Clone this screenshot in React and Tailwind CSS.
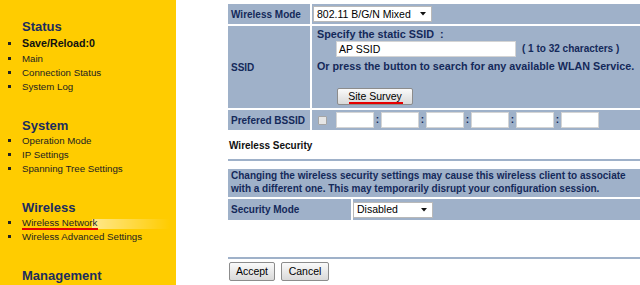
import React from "react";

function Bullet() {
  return (
    <span className="w-[22px] shrink-0 flex items-center pl-[8px]">
      <span className="w-[3px] h-[3px] bg-[#222] mb-[1px]" />
    </span>
  );
}

function Item({ children, bold, active }) {
  return (
    <li className={bold ? "relative flex items-center h-[17px] leading-[17px] text-[10.7px] font-bold text-[#111]" : "relative flex items-center h-[14px] leading-[14px] text-[9.7px] text-[#222]"}>
      <Bullet />
      {active ? (
        <>
          <span className="absolute left-[92px] top-[3px] h-[10px] w-[78px] bg-linear-to-r from-white/55 to-transparent" />
          <span className="relative border-b-2 border-[#e50000] leading-[11px] pr-[1px]">{children}</span>
        </>
      ) : (
        <span>{children}</span>
      )}
    </li>
  );
}

function Heading({ children }) {
  return <div className="pl-[22px] text-[13px] font-bold leading-4 text-[#1b2d5e]">{children}</div>;
}

function Arrow() {
  return (
    <svg width="6" height="4" viewBox="0 0 6 4" className="shrink-0">
      <path d="M0 0 H6 L3 3.5 Z" fill="#111" />
    </svg>
  );
}

function SelectBox({ value, w }) {
  return (
    <div className={`${w} h-[16px] bg-white border border-[#b9b9b9] flex items-center justify-between pl-[3px] pr-[5px] text-[10.5px] font-normal text-black leading-none`}>
      <span>{value}</span>
      <Arrow />
    </div>
  );
}

function Btn({ children, w, h, underline }) {
  return (
    <div className={`${w} ${h} relative flex items-center justify-center rounded-[2px] border border-[#8c8c8c] bg-linear-to-b from-[#fafafa] to-[#d9d9d9] text-[10.5px] font-normal text-black leading-none`}>
      <span>{children}</span>
      {underline ? <span className="absolute left-[11px] right-[9px] bottom-[0px] h-[2px] bg-[#e50000]" /> : null}
    </div>
  );
}

function Box({ w }) {
  return <div className={`${w} h-[16px] bg-white border border-[#d4d4d4]`} />;
}

export default function App() {
  const label = "bg-[#9fb1c9] pl-[3px] align-middle text-[10px] font-bold text-[#14295a] whitespace-nowrap";
  const cell = "bg-[#9fb1c9] align-middle text-[#14295a] font-bold";
  return (
    <div className="w-[640px] h-[285px] overflow-hidden flex bg-white font-['Liberation_Sans',Arial,sans-serif]">
      <aside className="w-[176px] shrink-0 bg-[#ffcc00] pt-[19px] flex flex-col gap-[24px]">
        <div>
          <Heading>Status</Heading>
          <ul>
            <Item bold>Save/Reload:0</Item>
            <Item>Main</Item>
            <Item>Connection Status</Item>
            <Item>System Log</Item>
          </ul>
        </div>
        <div>
          <Heading>System</Heading>
          <ul>
            <Item>Operation Mode</Item>
            <Item>IP Settings</Item>
            <Item>Spanning Tree Settings</Item>
          </ul>
        </div>
        <div>
          <Heading>Wireless</Heading>
          <ul>
            <Item active>Wireless Network</Item>
            <Item>Wireless Advanced Settings</Item>
          </ul>
        </div>
        <div>
          <Heading>Management</Heading>
        </div>
      </aside>

      <main className="pl-[50px] pt-[2px] flex flex-col w-[470px] shrink-0">
        <table className="border-separate border-spacing-[2px] w-[440px]">
          <tbody>
            <tr className="h-[20px]">
              <td className={`${label} w-[82px]`}>Wireless Mode</td>
              <td className={`${cell} pl-[1px]`}>
                <SelectBox value="802.11 B/G/N Mixed" w="w-[119px]" />
              </td>
            </tr>
            <tr className="h-[82px]">
              <td className={label}>SSID</td>
              <td className={`${cell} pl-[5px] pt-[1px] align-top`}>
                <div className="text-[10.8px] leading-[14px] whitespace-nowrap">Specify the static SSID&nbsp;&nbsp;:</div>
                <div className="flex items-center ml-[19px]">
                  <div className="w-[180px] h-[16px] bg-white border border-[#d4d4d4] flex items-center pl-[2px] text-[10.5px] font-normal text-black leading-none">AP SSID</div>
                  <span className="ml-[6px] text-[10px] leading-none whitespace-nowrap">( 1 to 32 characters )</span>
                </div>
                <div className="mt-[2px] text-[10.75px] leading-[14px] whitespace-nowrap">Or press the button to search for any available WLAN Service.</div>
                <div className="mt-[15px] ml-[20px]">
                  <Btn w="w-[76px]" h="h-[17px]" underline>Site Survey</Btn>
                </div>
              </td>
            </tr>
            <tr className="h-[20px]">
              <td className={label}>Prefered BSSID</td>
              <td className={`${cell} pl-[6px]`}>
                <div className="flex items-center">
                  <div className="w-[9px] h-[9px] border border-[#a5a5a5] bg-[#e6e6e6] rounded-[1px] mr-[9px]" />
                  <Box w="w-[38px]" />
                  <span className="w-[7px] text-center text-[10px] leading-none">:</span>
                  <Box w="w-[38px]" />
                  <span className="w-[7px] text-center text-[10px] leading-none">:</span>
                  <Box w="w-[38px]" />
                  <span className="w-[7px] text-center text-[10px] leading-none">:</span>
                  <Box w="w-[38px]" />
                  <span className="w-[7px] text-center text-[10px] leading-none">:</span>
                  <Box w="w-[38px]" />
                  <span className="w-[7px] text-center text-[10px] leading-none">:</span>
                  <Box w="w-[38px]" />
                </div>
              </td>
            </tr>
          </tbody>
        </table>

        <div className="ml-[3px] mt-[7px] leading-[14px] text-[10px] font-bold text-[#111]">Wireless Security</div>
        <div className="ml-[2px] mt-[6px] h-[2px] bg-[#9fb1c9]" />

        <table className="mt-[6px] border-separate border-spacing-[2px] w-[440px]">
          <tbody>
            <tr className="h-[28px]">
              <td colSpan={2} className="bg-[#9fb1c9] pl-[3px] align-middle text-[10px] leading-[12.7px] font-bold text-[#14295a] whitespace-nowrap">
                Changing the wireless security settings may cause this wireless client to associate
                <br />
                with a different one. This may temporarily disrupt your configuration session.
              </td>
            </tr>
            <tr className="h-[21px]">
              <td className={`${label} w-[123px]`}>Security Mode</td>
              <td className={`${cell} pl-[0px]`}>
                <SelectBox value="Disabled" w="w-[80px]" />
              </td>
            </tr>
          </tbody>
        </table>

        <div className="ml-[2px] mt-[35px] h-[2px] bg-[#9fb1c9]" />
        <div className="ml-[3px] mt-[3px] flex gap-[6px]">
          <Btn w="w-[46px]" h="h-[19px]">Accept</Btn>
          <Btn w="w-[48px]" h="h-[19px]">Cancel</Btn>
        </div>
      </main>
    </div>
  );
}
